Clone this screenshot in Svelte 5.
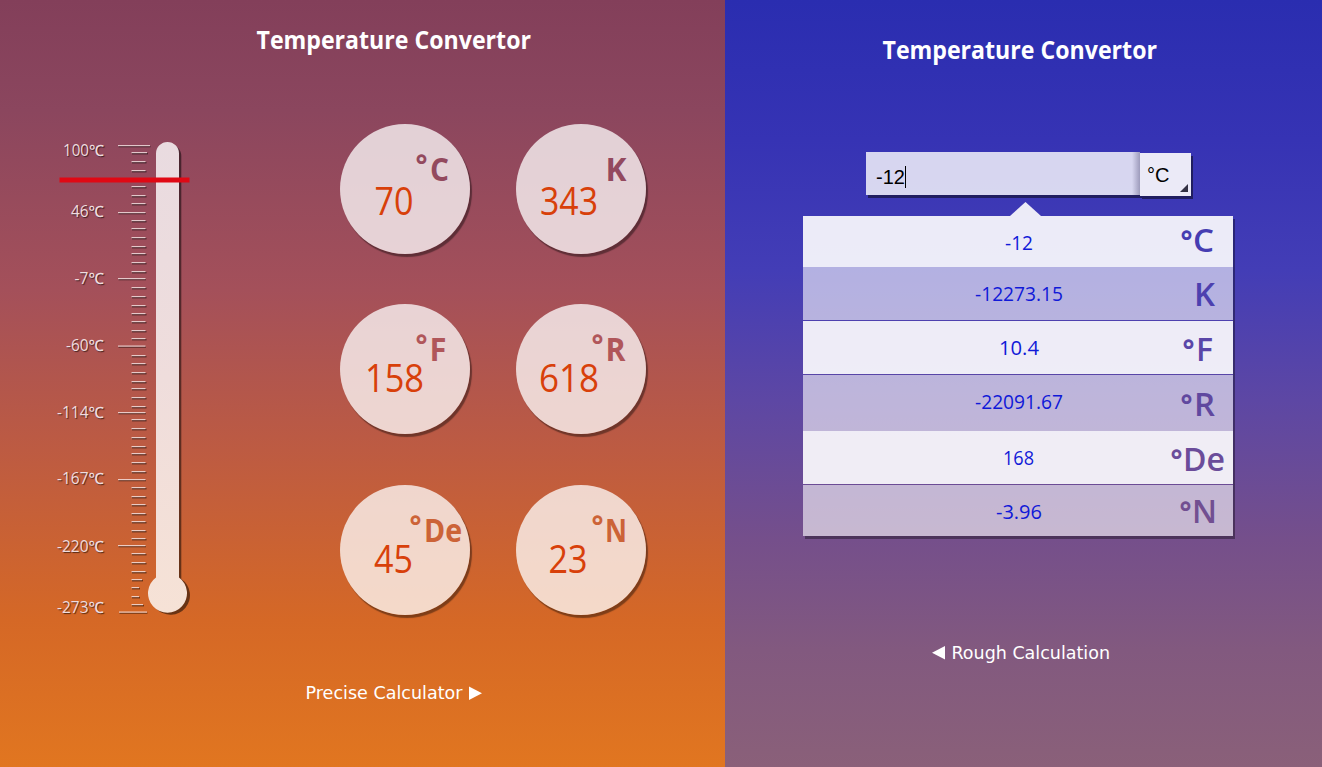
<script>
  const majors = [
    ['100℃', 145, 63, 155.5, 118, 150],
    ['46℃', 212, 71, 217, 118, 145.5],
    ['-7℃', 278, 74.5, 284, 118, 145.5],
    ['-60℃', 345.5, 66, 350.5, 118, 145.5],
    ['-114℃', 412, 57, 417.5, 118, 145.5],
    ['-167℃', 479, 57, 484, 118, 145.5],
    ['-220℃', 545, 57, 551.5, 118, 145.5],
    ['-273℃', 611.5, 57, 612.5, 119, 147]
  ];
  const minors = [
    152, 161, 170, 178, 186, 195, 203, 220, 228, 237, 246, 253, 262, 271,
    287, 296, 305, 313, 321, 330, 338, 355, 363, 372, 381, 388, 397, 406,
    419, 428, 437, 446, 453, 462, 471, 487, 496, 504, 513, 521, 530, 538,
    553, 562, 571, 579, 587, 596, 604
  ];
  const tickEnd = { 152: 147, 579: 142, 587: 139, 596: 139, 604: 143 };

  // Positions are relative to the top left corner of each dial.
  const dials = [
    { deg: 76, unit: 'C', ux: 90, uw: 19, value: '70', vx: 34.5, vw: 39, vy: 91, color: '#93495e' },
    { unit: 'K', ux: 89.5, uw: 21, value: '343', vx: 24, vw: 58, vy: 91, color: '#93495e' },
    { deg: 76, unit: 'F', ux: 89.5, uw: 17, value: '158', vx: 25, vw: 59, vy: 88, color: '#b0565a' },
    { deg: 76, unit: 'R', ux: 89.5, uw: 20, value: '618', vx: 23, vw: 60, vy: 88, color: '#b0565a' },
    { deg: 70, unit: 'De', ux: 84, uw: 38, value: '45', vx: 34, vw: 39, vy: 88, color: '#cc6337' },
    { deg: 76, unit: 'N', ux: 89, uw: 22, value: '23', vx: 32.5, vw: 39, vy: 88, color: '#cc6337' }
  ];

  const rows = [
    { h: 51, value: '-12', x: 202, w: 28, y: 34, deg: 378, unit: 'C', ux: 390, uw: 21, uy: 36, color: '#463db2' },
    { h: 53, value: '-12273.15', x: 172, w: 88, y: 34, unit: 'K', ux: 391, uw: 21, uy: 38.5, color: '#4c40af' },
    { h: 53, value: '10.4', x: 196, w: 40, y: 34, deg: 380, unit: 'F', ux: 393, uw: 17, uy: 40, color: '#5a46a8' },
    { h: 56, value: '-22091.67', x: 172, w: 88, y: 34, deg: 378, unit: 'R', ux: 391, uw: 21, uy: 40.5, color: '#60489f' },
    { h: 53, value: '168', x: 200, w: 31, y: 34, deg: 368, unit: 'De', ux: 380, uw: 42, uy: 39.5, color: '#6b4c9a' },
    { h: 51, value: '-3.96', x: 193, w: 46, y: 34, deg: 377, unit: 'N', ux: 389, uw: 25, uy: 37.5, color: '#724f91' }
  ];
  const lined = [2, 3, 5];
</script>

{#snippet line(text, width, x, y, cls)}
  <text class={cls} {x} {y} textLength={width} lengthAdjust="spacingAndGlyphs">{text}</text>
{/snippet}

<main>
  <section class="rough">
    <svg class="title" width="276" height="36">
      {@render line('Temperature Convertor', 274.5, 0.5, 26, 'heading')}
    </svg>
    <div class="body">
      <svg class="thermometer" width="200" height="490" viewBox="0 135 200 490">
        <defs>
          <linearGradient id="glass" x1="0" y1="0" x2="0" y2="1">
            <stop offset="0" stop-color="#e9dbe0" />
            <stop offset="0.5" stop-color="#efdddc" />
            <stop offset="1" stop-color="#f6e2d6" />
          </linearGradient>
        </defs>
        {#each minors as y}
          <rect x="132" y={y + 1} width={(tickEnd[y] ?? 145.5) - 131} height="1.4" fill="#000" opacity=".5" />
          <rect x="131.5" {y} width={(tickEnd[y] ?? 145.5) - 131.5} height="1.2" fill="#f6e6e6" opacity=".8" />
        {/each}
        {#each majors as [text, y, x, base, from, to]}
          <rect x={from + 0.5} y={y + 1} width={to - from} height="1.3" fill="#000" opacity=".45" />
          <rect x={from} {y} width={to - from} height="1.2" fill="#f6e6e6" opacity=".8" />
          {@render line(text, 104 - x, x, base, 'scale')}
        {/each}
        <path class="stem-shadow" d="M158 156a11.5 11.5 0 0 1 23.3 0V579a19.5 19.5 0 1 1-23 1Z" />
        <path
          class="stem"
          d="M156 153.500a11.500 11.500 0 0 1 23 0V577.500a19.500 19.500 0 1 1-23 0Z"
        />
        <rect x="59.5" y="177.5" width="130" height="5" fill="#e00814" />
      </svg>
      <div class="dials">
        {#each dials as d}
          <div class="dial">
            <svg width="130" height="130" fill={d.color}>
              {#if d.deg}<text class="degree" x={d.deg - 0.5} y="51">°</text>{/if}
              {@render line(d.unit, d.uw, d.ux, 57, 'unit')}
              {@render line(d.value, d.vw, d.vx, d.vy, 'reading')}
            </svg>
          </div>
        {/each}
      </div>
    </div>
    <svg class="switch" width="177" height="24">
      {@render line('Precise Calculator', 157, 0.5, 18, 'nav')}
      <path d="M164 5.5V19L177 12.2Z" fill="#fff" />
    </svg>
  </section>

  <section class="precise">
    <svg class="title" width="276" height="36">
      {@render line('Temperature Convertor', 274.5, 0.5, 26, 'heading')}
    </svg>
    <div class="entry">
      <div class="field"><span>-12</span><i></i></div>
      <div class="choice">°C<svg width="8" height="8"><path d="M8 0V8H0Z" fill="#333144" /></svg></div>
    </div>
    <svg class="pointer" width="32" height="14"><path d="M0 14 15.5 0 31 14Z" fill="#ecebf7" /></svg>
    <div class="table">
      {#each rows as r, i}
        <div class="row" class:alt={i % 2 === 1} class:lined={lined.includes(i)} style="height:{r.h}px">
          <svg width="430" height={r.h} fill={r.color}>
            {@render line(r.value, r.w, r.x, r.y, 'result')}
            {#if r.deg}<text class="degree" x={r.deg - 0.5} y={r.uy - 1}>°</text>{/if}
            {@render line(r.unit, r.uw, r.ux, r.uy, 'unit')}
          </svg>
        </div>
      {/each}
    </div>
    <svg class="switch" width="179" height="24">
      <path d="M13 5V18.5L0 11.7Z" fill="#fff" />
      {@render line('Rough Calculation', 158.5, 19.5, 18, 'nav')}
    </svg>
  </section>
</main>

<style>
  :global(body) {
    margin: 0;
  }
  main {
    display: flex;
    width: 1322px;
    height: 767px;
    overflow: hidden;
    font-family: 'Open Sans', 'Noto Sans', sans-serif;
  }
  svg {
    display: block;
    overflow: visible;
  }
  section {
    display: flex;
    flex-direction: column;
    box-sizing: border-box;
    height: 767px;
  }
  .rough {
    width: 725px;
    padding-top: 23px;
    background: linear-gradient(#833f5a 0, #8b465e 110px, #a4505a 290px, #bd5b42 450px, #d56826 620px, #e17620 767px);
  }
  .precise {
    width: 597px;
    padding-top: 33px;
    background: linear-gradient(#2a2db0 0, #3633b4 140px, #433db6 270px, #5d47a4 400px, #754f8b 540px, #82597f 650px, #8a6079 767px);
  }
  .rough .title {
    margin-left: 256px;
  }
  .precise .title {
    margin-left: 157px;
  }
  .heading {
    font-size: 24.5px;
    font-weight: 700;
    fill: #fff;
  }
  .body {
    display: flex;
    height: 490px;
    margin-top: 76px;
  }
  .dials {
    display: grid;
    grid-template-columns: 130px 130px;
    grid-template-rows: 130px 131px 130px;
    gap: 50px 46px;
    margin: -11px 0 0 140px;
  }
  .dial {
    width: 130px;
    height: 130px;
    border-radius: 50%;
    background: rgba(255, 255, 255, 0.75);
    box-shadow: 2px 3px 1px rgba(0, 0, 0, 0.4);
  }
  .scale {
    font-size: 15.5px;
    font-weight: 500;
    fill: #f0dcdf;
    text-shadow: 1px 1px 1px rgba(0, 0, 0, 0.6);
  }
  .stem-shadow {
    fill: #000;
    opacity: 0.5;
  }
  .stem {
    fill: url(#glass);
  }
  .unit {
    font-size: 33px;
    font-weight: 700;
  }
  .degree {
    font-size: 28px;
    font-weight: 700;
  }
  .table .unit {
    font-weight: 600;
  }
  .reading {
    font-size: 38px;
    fill: #d8400a;
  }
  .nav {
    font: 17.5px 'DejaVu Sans', sans-serif;
    fill: #fff;
  }
  .rough .switch {
    margin: 56px 0 0 305px;
  }
  .entry {
    display: flex;
    margin: 83px 0 0 141px;
    font: 20px 'Liberation Sans', sans-serif;
    color: #000;
  }
  .field {
    display: flex;
    align-items: center;
    box-sizing: border-box;
    width: 274px;
    height: 43px;
    padding: 7px 0 0 10px;
    background: linear-gradient(90deg, transparent 266px, rgba(50, 45, 90, 0.35)), rgba(255, 255, 255, 0.8);
    box-shadow: 2px 3px 0 #201e60;
  }
  .field i {
    width: 1px;
    height: 22px;
    background: #000;
  }
  .choice {
    display: flex;
    box-sizing: border-box;
    justify-content: space-between;
    width: 51px;
    height: 43px;
    margin-top: 1px;
    padding: 11px 3px 0 7px;
    background: #ebeaf7;
    box-shadow: 2px 3px 0 #201e60;
  }
  .choice svg {
    margin-top: 20px;
  }
  .pointer {
    margin: 6px 0 0 284.5px;
  }
  .table {
    width: 430px;
    height: 320px;
    margin: 0 0 0 78.4px;
    box-shadow: 2px 3px 0 rgba(0, 0, 0, 0.35);
  }
  .row {
    background: rgba(255, 255, 255, 0.9);
  }
  .alt {
    background: rgba(255, 255, 255, 0.6);
  }
  .lined {
    margin-top: 1px;
  }
  .result {
    font-size: 19.5px;
    fill: #1019d8;
  }
  .precise .switch {
    margin: 105px 0 0 207px;
  }
</style>
